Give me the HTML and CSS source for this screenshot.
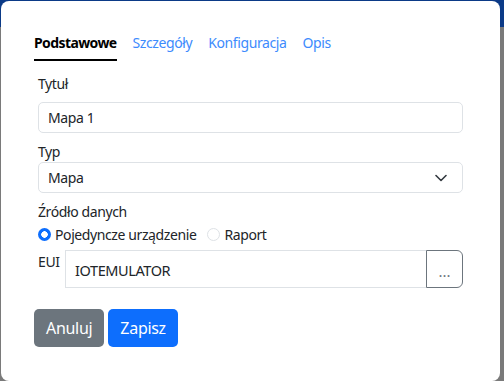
FILE: index.html
```html
<!DOCTYPE html>
<html lang="pl">
<head>
    <meta charset="UTF-8">
    <title>Edycja widżetu</title>
<link rel="stylesheet" href="styles.css">
</head>
<body>

<div class="modal">
    <ul class="tabs">
        <li><a class="tab active">Podstawowe</a></li>
        <li><a class="tab">Szczegóły</a></li>
        <li><a class="tab">Konfiguracja</a></li>
        <li><a class="tab">Opis</a></li>
    </ul>

    <div class="form">
        <label class="label label-first">Tytuł</label>
        <input class="field" type="text" value="Mapa 1">

        <label class="label">Typ</label>
        <div class="select">
            <span>Mapa</span>
            <svg width="12" height="8" viewBox="0 0 12 8"><path d="M1 1.5l5 5 5-5" fill="none" stroke="#343a40" stroke-width="1.6" stroke-linecap="round" stroke-linejoin="round"/></svg>
        </div>

        <label class="label">Źródło danych</label>
        <div class="radios">
            <span class="radio checked"></span><span class="radio-text">Pojedyncze urządzenie</span>
            <span class="radio"></span><span class="radio-text">Raport</span>
        </div>

        <div class="eui-row">
            <label class="eui-label">EUI</label>
            <div class="group">
                <span class="group-text">IOTEMULATOR</span>
                <button class="group-btn">...</button>
            </div>
        </div>
    </div>

    <div class="actions">
        <button class="btn btn-cancel">Anuluj</button>
        <button class="btn btn-save">Zapisz</button>
    </div>
</div>

</body>
</html>
```

FILE: styles.css
```css
body {
    margin: 0;
    height: 381px;
    overflow: hidden;
    font-family: 'Noto Sans', sans-serif;
    font-size: 14px;
    letter-spacing: -0.4px;
    color: #212529;
    background: linear-gradient(#0b3a87 0, #0b3a87 27px, #7a7a7a 27px);
}
.modal {
    margin: 1px 4px 0 1px;
    height: 380px;
    background: white;
    border-radius: 8px;
    padding: 31px 37px 0 32px;
    box-sizing: border-box;
}
.tabs {
    list-style: none;
    margin: 0;
    padding: 0 0 0 1px;
    display: flex;
    gap: 16px;
}
.tab {
    display: block;
    line-height: 21px;
    padding-bottom: 6px;
    border-bottom: 2px solid transparent;
    color: #3d8bfd;
}
.tab.active {
    color: black;
    font-weight: bold;
    letter-spacing: -0.6px;
    border-bottom-color: black;
}
.form {
    padding-left: 5px;
}
.label {
    display: block;
    line-height: 20px;
    margin: 9px 0 0;
}
.label-first {
    margin: 13px 0 8px;
}
.field, .select {
    display: flex;
    align-items: center;
    width: 100%;
    height: 31px;
    box-sizing: border-box;
    border: 1px solid #dee2e6;
    border-radius: 5px;
    padding: 0 9px;
    font: inherit;
    letter-spacing: inherit;
    color: #212529;
}
.select {
    justify-content: space-between;
    padding-right: 15px;
}
.radios {
    display: flex;
    align-items: center;
    height: 22px;
    margin-top: 1px;
}
.radio {
    width: 13px;
    height: 13px;
    border: 1px solid #dee2e6;
    border-radius: 50%;
    box-sizing: border-box;
    margin-right: 4px;
}
.radio.checked {
    border: none;
    background: radial-gradient(circle, white 0 3px, #0d6efd 3.5px);
}
.radio-text {
    margin-right: 11px;
}
.eui-row {
    display: flex;
    align-items: flex-start;
    margin-top: 5px;
}
.eui-label {
    width: 27px;
    line-height: 20px;
    padding-top: 2px;
}
.group {
    flex: 1;
    display: flex;
    height: 38px;
}
.group-text {
    flex: 1;
    display: flex;
    align-items: center;
    padding: 2px 9px 0;
    border: 1px solid #dee2e6;
    border-right: none;
    font-size: 14.5px;
}
.group-btn {
    width: 37px;
    border: 1px solid #6c757d;
    border-radius: 0 6px 6px 0;
    background: white;
    color: #6c757d;
    font: inherit;
    font-size: 15px;
    padding: 4px 0 0;
}
.actions {
    display: flex;
    gap: 4px;
    margin-top: 21px;
    padding-left: 1px;
}
.btn {
    height: 38px;
    border: none;
    border-radius: 5px;
    color: white;
    font-family: 'Noto Sans', sans-serif;
    font-size: 16px;
    letter-spacing: -0.3px;
    padding: 0 12px;
}
.btn-cancel {
    background-color: #6c757d;
}
.btn-save {
    background-color: #0d6efd;
}
```
